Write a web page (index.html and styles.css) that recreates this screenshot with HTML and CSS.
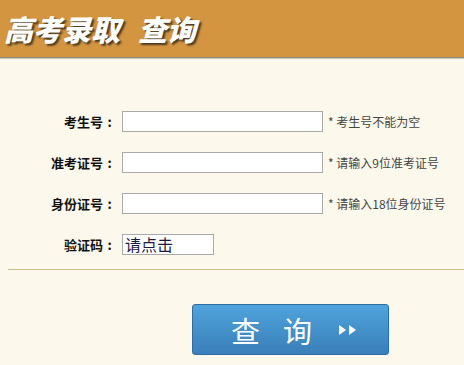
FILE: index.html
```html
<!DOCTYPE html>
<html lang="zh-CN">
  <head>
    <meta charset="UTF-8" />
    <title>高考录取 查询</title>
    <link rel="stylesheet" href="styles.css">
  </head>
  <body>
    <!-- Header -->
    <div class="header">
      <h1><span>高考录取</span><span class="title-gap">查询</span></h1>
    </div>

    <!-- Query form -->
    <div class="form">
      <div class="row">
        <label for="ksh">考生号<span class="colon">:</span></label>
        <input type="text" id="ksh" />
        <span class="hint">* 考生号不能为空</span>
      </div>
      <div class="row">
        <label for="zkzh">准考证号<span class="colon">:</span></label>
        <input type="text" id="zkzh" />
        <span class="hint">* 请输入9位准考证号</span>
      </div>
      <div class="row">
        <label for="sfzh">身份证号<span class="colon">:</span></label>
        <input type="text" id="sfzh" />
        <span class="hint">* 请输入18位身份证号</span>
      </div>
      <div class="row row-code">
        <label>验证码<span class="colon">:</span></label>
        <div class="code">请点击</div>
      </div>
    </div>

    <div class="divider"></div>

    <button class="submit">
      <span>查</span><span class="second">询</span>
      <svg class="arrows" width="20" height="12" viewBox="0 0 20 12">
        <polygon points="1,1 8,6 1,11" fill="#fff" />
        <polygon points="11,1 18,6 11,11" fill="#fff" />
      </svg>
    </button>
  </body>
</html>
```

FILE: styles.css
```css
/* Page */
body {
  margin: 0;
  background-color: #fcf9ec;
  font-family: "Noto Sans CJK SC", "Noto Sans", sans-serif;
}

/* Header bar */
.header {
  height: 57px;
  background-color: #d49540;
  border-bottom: 1px solid #8a8a80;
  box-shadow: 0 1px 0 #cfcabb;
}

.header h1 {
  margin: 0;
  padding-left: 4px;
  font-size: 29px;
  line-height: 56px;
  font-style: italic;
  font-weight: 900;
  color: #fff;
  text-shadow: 2px 2px 2px #4a3a20;
}

.title-gap {
  margin-left: 18px;
}

/* Form rows */
.form {
  padding-top: 53px;
}

.row {
  display: flex;
  align-items: center;
  height: 21px;
  margin-bottom: 20px;
}

.row-code {
  margin-top: 2px;
  margin-bottom: 0;
}

.row label {
  width: 116px;
  text-align: right;
  font-size: 13px;
  font-weight: bold;
  color: #111;
  margin-right: 6px;
}

/* full-width colon, centred in its cell */
.colon {
  display: inline-block;
  width: 1em;
  text-align: center;
}

.row input {
  box-sizing: border-box;
  width: 201px;
  height: 21px;
  border: 1px solid #aaa;
  background: #fff;
  margin: 0;
}

.hint {
  margin-left: 5px;
  font-size: 12px;
  color: #444;
}

.code {
  box-sizing: border-box;
  width: 92px;
  height: 21px;
  border: 1px solid #aaa;
  background: #fff;
  font-size: 16px;
  line-height: 18px;
  padding-left: 2px;
  color: #1a1a40;
}

/* Divider */
.divider {
  margin: 14px 0 0 8px;
  border-top: 1px solid #c8bc80;
}

/* Submit button */
.submit {
  display: flex;
  align-items: center;
  margin: 34px 0 0 192px;
  width: 197px;
  height: 51px;
  padding: 0 0 0 38px;
  border: 1px solid #2f6ea3;
  border-radius: 3px;
  background: linear-gradient(#4fa3dc, #3a7fb9);
  color: #fff;
  font-family: "Noto Sans CJK SC", sans-serif;
  font-size: 29px;
  cursor: pointer;
}

.submit .second {
  margin-left: 23px;
}

.submit .arrows {
  margin-left: 26px;
}
```
